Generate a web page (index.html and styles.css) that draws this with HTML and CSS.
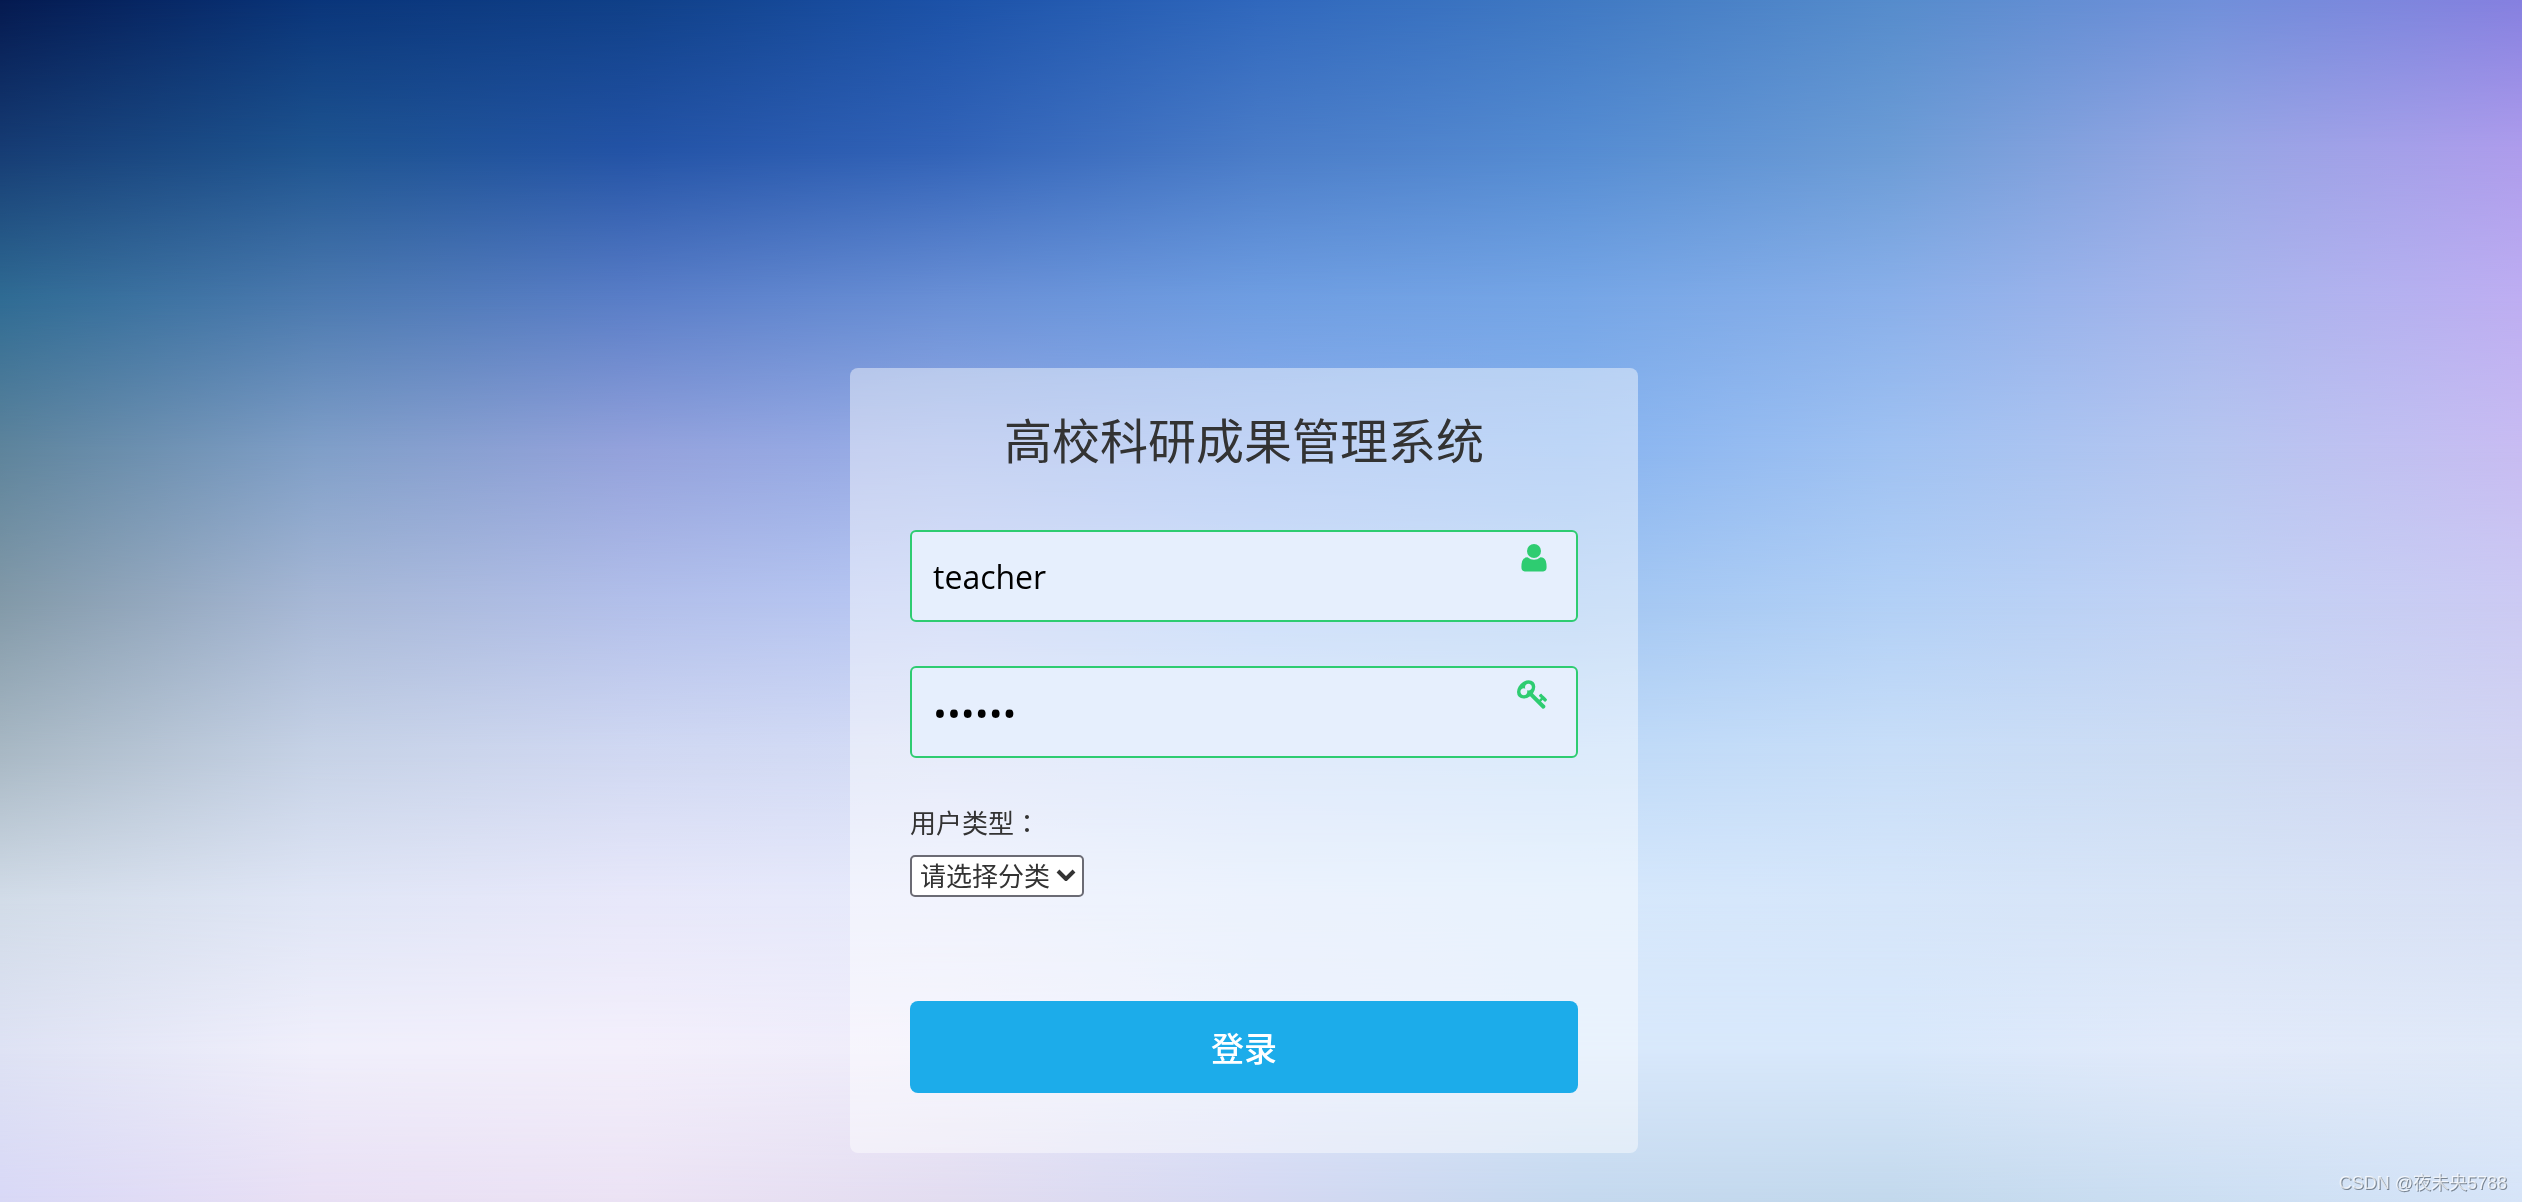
FILE: index.html
```html
<!DOCTYPE html>
<html lang="zh-CN">
<head>
  <meta charset="utf-8">
  <meta name="viewport" content="width=device-width, initial-scale=1">
  <title>高校科研成果管理系统</title>
  <link rel="stylesheet" href="styles.css">
</head>
<body>
  <div class="backdrop" aria-hidden="true">
    <div class="band band-1"></div>
    <div class="band band-2"></div>
    <div class="band band-3"></div>
    <div class="band band-4"></div>
    <div class="band band-5"></div>
    <div class="band band-6"></div>
    <div class="band band-7"></div>
    <div class="band band-8"></div>
    <div class="band band-9"></div>
  </div>
  <main class="page">
    <form class="card">
      <h1 class="title">高校科研成果管理系统</h1>
      <div class="field">
        <input class="input" type="text" name="username" value="teacher" aria-label="用户名">
        <svg class="field-icon" viewBox="1 0 32 32" aria-hidden="true">
          <circle cx="18" cy="9" r="7"/>
          <path d="M11.5 15.2 Q18 20.4 24.5 15.2 Q28.6 15.4 29.8 19 Q30.6 21.6 30.6 25 Q30.6 29.4 27.2 29.4 H8.8 Q5.4 29.4 5.4 25 Q5.4 21.6 6.2 19 Q7.4 15.4 11.5 15.2 Z"/>
        </svg>
      </div>
      <div class="field">
        <input class="input input-password" type="password" name="password" value="123456" aria-label="密码">
        <svg class="field-icon" viewBox="0 0 1792 1792" aria-hidden="true">
          <path d="M832 512q0-80-56-136t-136-56-136 56-56 136q0 42 19 83-41-19-83-19-80 0-136 56t-56 136 56 136 136 56 136-56 56-136q0-42-19-83 41 19 83 19 80 0 136-56t56-136zm851 704q0 17-49 66t-66 49q-9 0-28.500-16t-36.500-33-38.500-40-24.500-26l-96 96 220 220q28 28 28 68 0 42-39 81t-81 39q-40 0-68-28l-671-671q-176 131-365 131-163 0-265.500-102.500t-102.500-265.500q0-160 95-313t248-248 313-95q163 0 265.500 102.500t102.500 265.500q0 189-131 365l355 355 96-96q-3-3-26-24.500t-40-38.500-33-36.500-16-28.500q0-17 49-66t66-49q13 0 23 10 6 6 46 44.500t82 79.500 86.500 86 73 78 28.500 41z"/>
        </svg>
      </div>
      <label class="label" for="role">用户类型<span class="colon" lang="zh-TW">：</span></label>
      <div class="select-wrap">
        <select class="select" id="role" name="role">
          <option>请选择分类</option>
        </select>
        <svg class="chevron" viewBox="0 0 20 12" aria-hidden="true"><path d="M2 2l8 8 8-8"/></svg>
      </div>
      <button class="submit" type="submit">登录</button>
    </form>
  </main>
  <footer class="watermark">CSDN @夜未央5788</footer>
</body>
</html>
```
FILE: styles.css
```css
* {
  box-sizing: border-box;
}

body {
  margin: 0;
  min-height: 100vh;
  color: #333;
  font-family: "Open Sans", "Noto Sans CJK SC", sans-serif;
}

/* Soft colour field: each band blends vertically into the next one */
.backdrop {
  position: fixed;
  inset: 0;
  z-index: -1;
  display: grid;
}

.band {
  grid-area: 1 / 1;
}

.band-1 {
  background: linear-gradient(to right, #051a50, #0a357a, #104088, #1c52a8, #3068bd, #4079c3, #568ccc, #7090da, #8680e0);
}

.band-2 {
  background: linear-gradient(to right, #163c74, #1e5490, #2353a6, #3263b8, #4a7cc8, #558cd2, #6c9cd6, #96a6e4, #ae9cec);
  mask-image: linear-gradient(transparent 0%, #000 12.5%);
}

.band-3 {
  background: linear-gradient(to right, #306c94, #4c7ab0, #5a7ec8, #6a90d6, #6f9ee2, #76a6e6, #8ab0ea, #a8b6ec, #beaef2);
  mask-image: linear-gradient(transparent 12.5%, #000 25%);
}

.band-4 {
  background: linear-gradient(to right, #5e849c, #809fc8, #94a2dc, #98aee8, #8fb0ee, #88b4f0, #a0c2f2, #b6c6f0, #c8bcf2);
  mask-image: linear-gradient(transparent 25%, #000 37.5%);
}

.band-5 {
  background: linear-gradient(to right, #8299a8, #a7b8d6, #b2bfea, #b8c8f4, #a8c8f6, #a2c6f2, #b2d0f6, #c2d2f4, #cccaf3);
  mask-image: linear-gradient(transparent 37.5%, #000 50%);
}

.band-6 {
  background: linear-gradient(to right, #a8b8c4, #c6d2e6, #d0d8f2, #d4dcf6, #c8daf8, #bfdaf8, #c8def8, #cddcf3, #d2d4f2);
  mask-image: linear-gradient(transparent 50%, #000 62.5%);
}

.band-7 {
  background: linear-gradient(to right, #d2dce8, #e0e6f6, #e8e8fa, #e6eafb, #dce8fb, #d6e8fc, #d6e6fa, #d8e4f6, #d9e1f5);
  mask-image: linear-gradient(transparent 62.5%, #000 75%);
}

.band-8 {
  background: linear-gradient(to right, #dee2f4, #f0effb, #f3effb, #eeecfa, #e0e8fb, #d8e8fb, #d8e8fb, #e2eafa, #e0e9f8);
  mask-image: linear-gradient(transparent 75%, #000 87.5%);
}

.band-9 {
  background: linear-gradient(to right, #d8d8f6, #e8dff4, #ebe2f4, #e2dcf0, #d4d8f2, #c4d8ee, #c2d8ec, #cbdef2, #d6e4f8);
  mask-image: linear-gradient(transparent 87.5%, #000 100%);
}

.page {
  display: flex;
  justify-content: center;
  padding: 368px 34px 40px 0;
}

.card {
  display: flex;
  flex-direction: column;
  width: 100%;
  max-width: 788px;
  padding: 40px 60px 60px;
  border-radius: 8px;
  background: rgba(255, 255, 255, 0.45);
}

.title {
  margin: 0 0 56px;
  font-size: 48px;
  font-weight: 400;
  line-height: 66px;
  text-align: center;
}

.field {
  position: relative;
  margin-bottom: 44px;
}

.input {
  display: block;
  width: 100%;
  height: 92px;
  padding: 0 64px 0 21px;
  border: 2px solid #2ecc71;
  border-radius: 6px;
  outline: none;
  background: #e6effd;
  color: #000;
  font: inherit;
  font-size: 32px;
}

.input-password {
  font-size: 37px;
}

.field-icon {
  position: absolute;
  top: 12px;
  right: 29px;
  width: 32px;
  height: 32px;
  fill: #2ecc71;
}

.label {
  font-size: 26px;
  line-height: 40px;
}

.colon {
  font-family: "Noto Sans CJK TC", sans-serif;
}

.select-wrap {
  position: relative;
  align-self: flex-start;
  margin: 12px 0 104px;
}

.select {
  display: block;
  width: 174px;
  height: 42px;
  padding: 0 0 0 8px;
  border: 2px solid #6b6b74;
  border-radius: 5px;
  appearance: none;
  background: #fff;
  color: #333;
  font: inherit;
  font-size: 26px;
  line-height: 38px;
}

.chevron {
  position: absolute;
  top: 14px;
  right: 8px;
  width: 20px;
  height: 12px;
  fill: none;
  stroke: #333;
  stroke-width: 4;
  pointer-events: none;
}

.submit {
  height: 92px;
  border: 0;
  border-radius: 8px;
  background: #1cacea;
  color: #fff;
  font: inherit;
  font-size: 33px;
  font-weight: 500;
}

.watermark {
  position: fixed;
  right: 15px;
  bottom: 6px;
  color: rgba(255, 255, 255, 0.7);
  font-family: "Liberation Sans", "Noto Sans CJK SC", sans-serif;
  font-size: 18px;
  line-height: 26px;
  text-shadow: 1px 1px 0 rgba(60, 70, 80, 0.6);
}
```
